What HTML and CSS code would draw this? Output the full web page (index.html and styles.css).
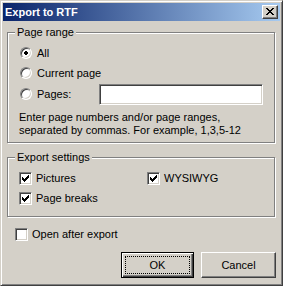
FILE: index.html
```html
<!DOCTYPE html>
<html>
<head>
<meta charset="utf-8">
<title>Export to RTF</title>
<link rel="stylesheet" href="styles.css">
</head>
<body>
<div class="window">
  <div class="titlebar">
    <span class="title">Export to RTF</span>
    <span class="close">
      <svg width="8" height="7" viewBox="0 0 8 7" shape-rendering="crispEdges">
        <rect x="0" y="0" width="2" height="1"/><rect x="6" y="0" width="2" height="1"/>
        <rect x="1" y="1" width="2" height="1"/><rect x="5" y="1" width="2" height="1"/>
        <rect x="2" y="2" width="4" height="1"/>
        <rect x="3" y="3" width="2" height="1"/>
        <rect x="2" y="4" width="4" height="1"/>
        <rect x="1" y="5" width="2" height="1"/><rect x="5" y="5" width="2" height="1"/>
        <rect x="0" y="6" width="2" height="1"/><rect x="6" y="6" width="2" height="1"/>
      </svg>
    </span>
  </div>
  <div class="content">
    <fieldset class="group group-range">
      <legend>Page range</legend>
      <div class="group-body">
        <div class="row">
          <span class="radio">
            <svg class="dot" width="4" height="4" viewBox="0 0 4 4" shape-rendering="crispEdges">
              <rect x="1" y="0" width="2" height="1"/><rect x="0" y="1" width="4" height="2"/><rect x="1" y="3" width="2" height="1"/>
            </svg>
          </span>
          <span>All</span>
        </div>
        <div class="row">
          <span class="radio"></span>
          <span>Current page</span>
        </div>
        <div class="row row-pages">
          <span class="radio"></span>
          <span>Pages:</span>
          <span class="input"></span>
        </div>
        <p class="help">Enter page numbers and/or page ranges,<br>separated by commas. For example, 1,3,5-12</p>
      </div>
    </fieldset>

    <fieldset class="group group-settings">
      <legend>Export settings</legend>
      <div class="group-body checks">
        <div class="check-row">
          <span class="checkbox">
            <svg width="7" height="7" viewBox="0 0 7 7" shape-rendering="crispEdges">
              <rect x="6" y="0" width="1" height="1"/><rect x="5" y="1" width="2" height="1"/>
              <rect x="0" y="2" width="1" height="1"/><rect x="4" y="2" width="3" height="1"/>
              <rect x="0" y="3" width="2" height="1"/><rect x="3" y="3" width="3" height="1"/>
              <rect x="0" y="4" width="5" height="1"/><rect x="1" y="5" width="3" height="1"/>
              <rect x="2" y="6" width="1" height="1"/>
            </svg>
          </span>
          <span>Pictures</span>
        </div>
        <div class="check-row">
          <span class="checkbox">
            <svg width="7" height="7" viewBox="0 0 7 7" shape-rendering="crispEdges">
              <rect x="6" y="0" width="1" height="1"/><rect x="5" y="1" width="2" height="1"/>
              <rect x="0" y="2" width="1" height="1"/><rect x="4" y="2" width="3" height="1"/>
              <rect x="0" y="3" width="2" height="1"/><rect x="3" y="3" width="3" height="1"/>
              <rect x="0" y="4" width="5" height="1"/><rect x="1" y="5" width="3" height="1"/>
              <rect x="2" y="6" width="1" height="1"/>
            </svg>
          </span>
          <span>WYSIWYG</span>
        </div>
        <div class="check-row">
          <span class="checkbox">
            <svg width="7" height="7" viewBox="0 0 7 7" shape-rendering="crispEdges">
              <rect x="6" y="0" width="1" height="1"/><rect x="5" y="1" width="2" height="1"/>
              <rect x="0" y="2" width="1" height="1"/><rect x="4" y="2" width="3" height="1"/>
              <rect x="0" y="3" width="2" height="1"/><rect x="3" y="3" width="3" height="1"/>
              <rect x="0" y="4" width="5" height="1"/><rect x="1" y="5" width="3" height="1"/>
              <rect x="2" y="6" width="1" height="1"/>
            </svg>
          </span>
          <span>Page breaks</span>
        </div>
      </div>
    </fieldset>

    <div class="check-row open-row">
      <span class="checkbox"></span>
      <span>Open after export</span>
    </div>

    <div class="buttons">
      <button class="btn btn-default"><span class="focus">OK</span></button>
      <button class="btn btn-cancel">Cancel</button>
    </div>
  </div>
</div>
</body>
</html>
```

FILE: styles.css
```css
* { box-sizing: border-box; }
html, body { margin: 0; padding: 0; }
body {
  font-family: "Liberation Sans", Arial, sans-serif;
  font-size: 11px;
  color: #000;
  background: #d4d0c8;
}
.window {
  width: 283px;
  height: 286px;
  background: #d4d0c8;
  border: 1px solid;
  border-color: #d4d0c8 #404040 #404040 #d4d0c8;
  box-shadow: inset 1px 1px #fff, inset -1px -1px #808080;
  padding: 2px;
  display: flex;
  flex-direction: column;
}
.titlebar {
  height: 18px;
  flex: none;
  background: linear-gradient(to right, #0a246a, #a6caf0);
  display: flex;
  align-items: center;
  justify-content: space-between;
  padding: 0 2px 0 2px;
}
.title {
  color: #fff;
  font-weight: bold;
  font-size: 11px;
  line-height: 13px;
}
.close {
  width: 16px;
  height: 14px;
  background: #d4d0c8;
  border: 1px solid;
  border-color: #fff #404040 #404040 #fff;
  box-shadow: inset -1px -1px #808080;
  display: flex;
  align-items: center;
  justify-content: center;
  padding-right: 1px;
  padding-bottom: 1px;
}
.close svg { display: block; fill: #000; }

.content {
  flex: 1;
  display: flex;
  flex-direction: column;
  padding: 5px 5px 0 4px;
}
.group {
  margin: 0;
  padding: 0 7px;
  min-width: 0;
  border: 1px solid #808080;
  box-shadow: inset 1px 1px #fff, 1px 1px #fff;
}
.group legend {
  padding: 0 2px;
  line-height: 13px;
  background: #d4d0c8;
}
.group-body { padding-left: 5px; }
.group-range .group-body { padding-top: 4px; padding-bottom: 5px; padding-right: 4px; }
.group-settings { margin-top: 8px; }

.row {
  display: flex;
  align-items: center;
  height: 20px;
}
.row-pages { height: 22px; }
.radio {
  width: 12px;
  height: 12px;
  flex: none;
  margin-right: 5px;
  border-radius: 50%;
  background: #fff;
  border: 1px solid;
  border-color: #808080 #fff #fff #808080;
  box-shadow: inset 1px 1px #404040, inset -1px -1px #d4d0c8;
  display: flex;
  align-items: center;
  justify-content: center;
}
.radio .dot { display: block; fill: #000; }
.input {
  margin-left: auto;
  width: 164px;
  height: 21px;
  background: #fff;
  border: 1px solid;
  border-color: #808080 #fff #fff #808080;
  box-shadow: inset 1px 1px #404040, inset -1px -1px #d4d0c8;
}
.help {
  margin: 6px 0 0 -1px;
  line-height: 13px;
}

.checks {
  display: grid;
  grid-template-columns: 128px 1fr;
  padding-top: 4px;
  padding-bottom: 8px;
  margin-left: -1px;
}
.check-row {
  display: flex;
  align-items: center;
  height: 20px;
}
.checkbox {
  width: 13px;
  height: 13px;
  flex: none;
  margin-right: 4px;
  background: #fff;
  border: 1px solid;
  border-color: #808080 #fff #fff #808080;
  box-shadow: inset 1px 1px #404040, inset -1px -1px #d4d0c8;
  display: flex;
  align-items: center;
  justify-content: center;
}
.checkbox svg { display: block; fill: #000; }
.open-row { margin-top: 7px; margin-left: 8px; }

.buttons {
  display: flex;
  justify-content: flex-end;
  gap: 7px;
  margin-top: 8px;
  margin-right: -1px;
}
.btn {
  font-family: inherit;
  font-size: 11px;
  color: #000;
  height: 26px;
  padding: 0;
  background: #d4d0c8;
  border: 1px solid;
  border-color: #fff #404040 #404040 #fff;
  box-shadow: inset -1px -1px #808080;
  display: flex;
  align-items: center;
  justify-content: center;
}
.btn-default {
  width: 73px;
  border-color: #000;
  box-shadow: inset 1px 1px #fff, inset -1px -1px #404040, inset -2px -2px #808080;
  padding: 3px;
}
.btn-cancel { width: 75px; }
.focus {
  width: 100%;
  height: 100%;
  border: 1px dotted #000;
  display: flex;
  align-items: center;
  justify-content: center;
}
```
